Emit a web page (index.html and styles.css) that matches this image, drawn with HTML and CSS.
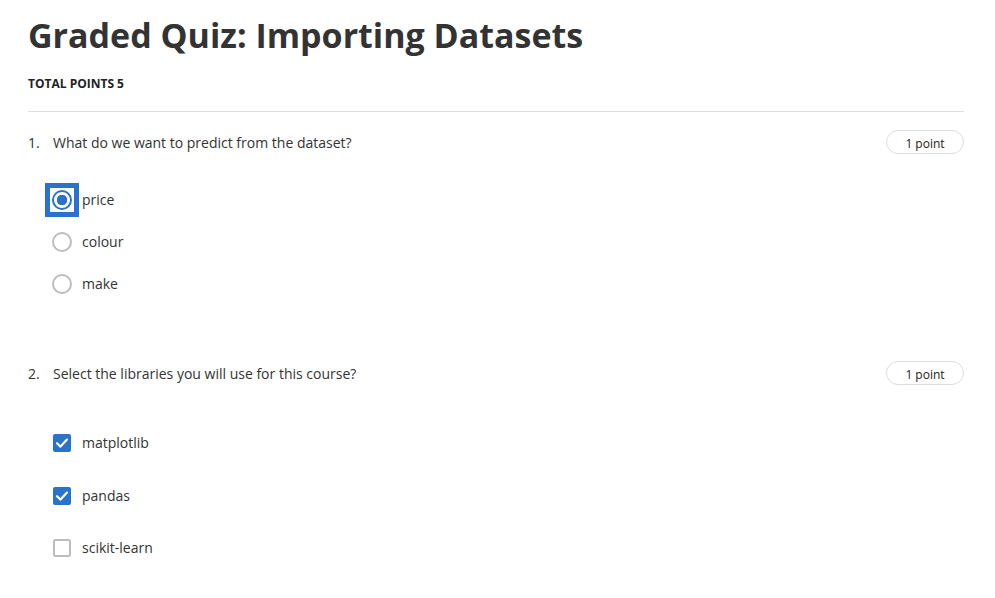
FILE: index.html
```html
<!DOCTYPE html>
<html>
<head>
<meta charset="utf-8">
<link rel="stylesheet" href="styles.css">
</head>
<body>
<main class="quiz">
  <h1 class="title">Graded Quiz: Importing Datasets</h1>
  <div class="total">TOTAL POINTS 5</div>
  <hr class="divider">

  <section class="question q1">
    <div class="q-head">
      <span class="q-num">1.</span>
      <span class="q-text">What do we want to predict from the dataset?</span>
      <span class="pill">1 point</span>
    </div>
    <div class="options radios">
      <label class="option"><span class="radio-wrap focus"><span class="radio checked"></span></span><span class="opt-text">price</span></label>
      <label class="option"><span class="radio-wrap"><span class="radio"></span></span><span class="opt-text">colour</span></label>
      <label class="option"><span class="radio-wrap"><span class="radio"></span></span><span class="opt-text">make</span></label>
    </div>
  </section>

  <section class="question q2">
    <div class="q-head">
      <span class="q-num">2.</span>
      <span class="q-text">Select the libraries you will use for this course?</span>
      <span class="pill">1 point</span>
    </div>
    <div class="options checks">
      <label class="option"><span class="box checked"><svg viewBox="0 0 18 18" width="18" height="18"><path d="M4 9.2 L7.5 12.6 L14 5.6" fill="none" stroke="#fff" stroke-width="2.2" stroke-linecap="round" stroke-linejoin="round"/></svg></span><span class="opt-text">matplotlib</span></label>
      <label class="option"><span class="box checked"><svg viewBox="0 0 18 18" width="18" height="18"><path d="M4 9.2 L7.5 12.6 L14 5.6" fill="none" stroke="#fff" stroke-width="2.2" stroke-linecap="round" stroke-linejoin="round"/></svg></span><span class="opt-text">pandas</span></label>
      <label class="option"><span class="box"></span><span class="opt-text">scikit-learn</span></label>
    </div>
  </section>
</main>
</body>
</html>
```
FILE: styles.css
```css
html, body {
  margin: 0;
  padding: 0;
  background: #fff;
}
body {
  font-family: "Open Sans", "Liberation Sans", sans-serif;
  color: #373a3c;
}
.quiz {
  width: 936px;
  padding: 0 0 0 28px;
}
.title {
  margin: 0;
  padding-top: 11px;
  font-size: 34px;
  line-height: 48px;
  font-weight: 700;
  color: #333;
}
.total {
  margin-top: 16px;
  font-size: 12px;
  line-height: 17px;
  font-weight: 700;
  color: #222;
}
.divider {
  margin: 19px 0 0 0;
  border: 0;
  border-top: 1px solid #ddd;
  height: 0;
}
.question {
  display: flex;
  flex-direction: column;
}
.q1 { padding-top: 18px; }
.q2 { padding-top: 60px; }
.q-head {
  display: flex;
  align-items: center;
  height: 24px;
  font-size: 14px;
}
.q-num {
  width: 25px;
  color: #333;
}
.q-text {
  flex: 1;
  color: #333;
}
.pill {
  box-sizing: border-box;
  width: 78px;
  height: 24px;
  border: 1px solid #ddd;
  border-radius: 12px;
  font-size: 12px;
  display: flex;
  align-items: center;
  justify-content: center;
  color: #222;
  padding-top: 2px;
}
.options {
  display: flex;
  flex-direction: column;
  padding-left: 16px;
}
.option {
  display: flex;
  align-items: center;
  font-size: 14px;
  color: #333;
}
.radios { padding-top: 29px; gap: 8px; }
.radios .option { height: 34px; }
.radio-wrap {
  box-sizing: border-box;
  width: 34px;
  height: 34px;
  margin-left: 1px;
  margin-right: 3px;
  display: flex;
  align-items: center;
  justify-content: center;
  border: 5px solid transparent;
}
.radio-wrap.focus {
  border-color: #2a73cc;
}
.radio {
  box-sizing: border-box;
  width: 20px;
  height: 20px;
  border-radius: 50%;
  border: 2px solid #bdbdbd;
  background: #fff;
}
.radio.checked {
  border-color: #2a73cc;
  background: radial-gradient(circle, #2a73cc 0 5px, #fff 5.5px);
}
.checks { padding-top: 49px; gap: 34.5px; }
.checks .option { height: 18px; }
.box {
  box-sizing: border-box;
  width: 18px;
  height: 18px;
  margin-left: 9px;
  margin-right: 11px;
  border-radius: 2px;
  border: 2px solid #bdbdbd;
  background: #fff;
  display: flex;
}
.box.checked {
  border: 0;
  background: #2a73cc;
}
.opt-text { line-height: 20px; }
```
